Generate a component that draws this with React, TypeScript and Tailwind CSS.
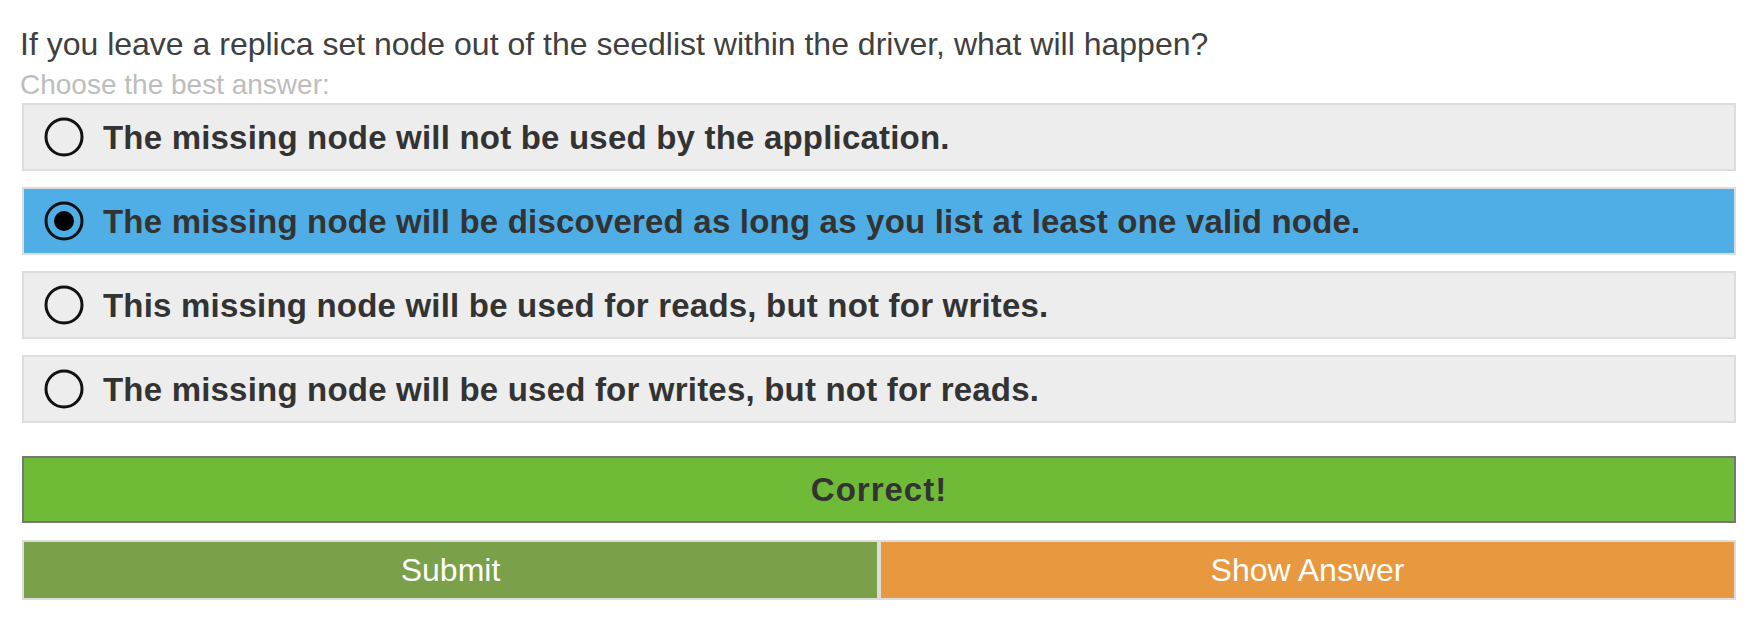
import React, { useState } from 'react';

const options = [
  'The missing node will not be used by the application.',
  'The missing node will be discovered as long as you list at least one valid node.',
  'This missing node will be used for reads, but not for writes.',
  'The missing node will be used for writes, but not for reads.',
];

function Radio({ checked }: { checked: boolean }) {
  return (
    <svg width="40" height="40" viewBox="0 0 40 40" className="shrink-0">
      <circle cx="20" cy="20" r="18" fill="none" stroke="#111" strokeWidth="3" />
      {checked && <circle cx="20" cy="20" r="10" fill="#000" />}
    </svg>
  );
}

export default function App() {
  const [selected, setSelected] = useState(1);

  return (
    <div className="w-[1756px] h-[627px] bg-white pl-[22px] pr-[20px] pt-[28px] font-['Liberation_Sans',Arial,sans-serif]">
      <p className="-ml-[2px] text-[32px] leading-[32px] text-[#404040]">
        If you leave a replica set node out of the seedlist within the driver, what will happen?
      </p>
      <p className="-ml-[2px] mt-[11px] text-[28px] leading-[28px] text-[#bdbdbd]">Choose the best answer:</p>

      <div className="mt-[4px] flex flex-col gap-[16px]">
        {options.map((text, i) => (
          <div
            key={i}
            onClick={() => setSelected(i)}
            className={`h-[68px] flex items-center gap-[19px] pl-[20px] border-2 border-[#dddddd] cursor-pointer ${
              selected === i ? 'bg-[#4faee6]' : 'bg-[#ededed]'
            }`}
          >
            <Radio checked={selected === i} />
            <span className="text-[33px] leading-[33px] font-bold tracking-[0.2px] text-[#333333]">{text}</span>
          </div>
        ))}
      </div>

      <div className="mt-[33px] h-[67px] flex items-center justify-center bg-[#6fba37] border-2 border-[#777777]">
        <span className="text-[33px] leading-[33px] font-bold tracking-[1px] text-[#333333]">Correct!</span>
      </div>

      <div className="mt-[17px] flex">
        <button className="flex-1 h-[60px] flex items-center justify-center bg-[#7aa049] border-2 border-[#dddddd] text-white text-[32px] leading-[32px]">
          Submit
        </button>
        <button className="flex-1 h-[60px] flex items-center justify-center bg-[#e8983f] border-2 border-[#dddddd] text-white text-[32px] leading-[32px]">
          Show Answer
        </button>
      </div>
    </div>
  );
}
